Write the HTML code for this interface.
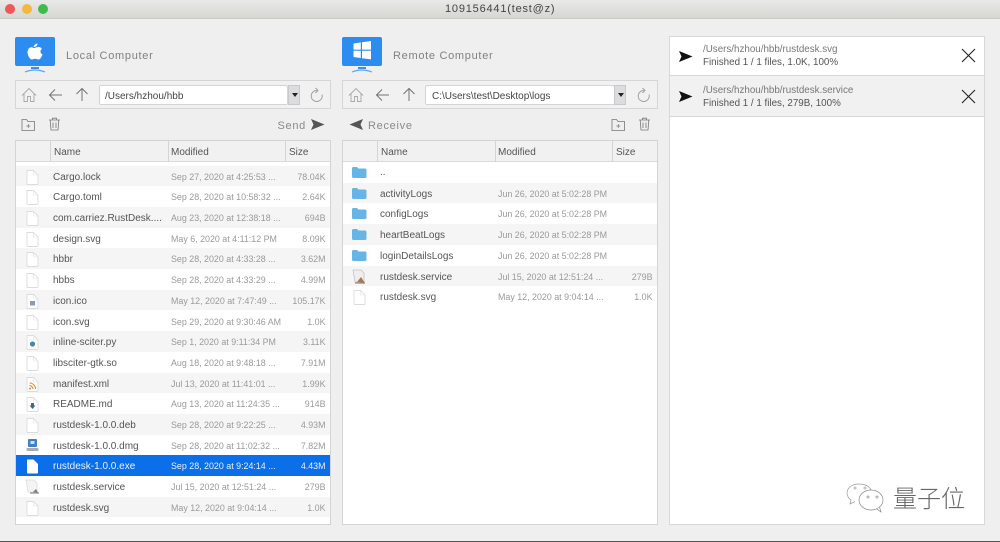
<!DOCTYPE html>
<html><head><meta charset="utf-8">
<style>
html,body{margin:0;padding:0;width:1000px;height:542px;overflow:hidden;background:#efeff0;font-family:"Liberation Sans",sans-serif;}
#wrap{position:relative;width:1000px;height:542px;overflow:hidden;filter:blur(.3px);}
.a{position:absolute;}
.t{position:absolute;white-space:nowrap;}
.tb{left:0;top:0;width:1000px;height:18px;background:linear-gradient(#e9e9e7,#d6d6d3);}
.dot{position:absolute;top:3.5px;width:10px;height:10px;border-radius:50%;}
.box{position:absolute;background:#f1f1f2;border:1px solid #d6d6d8;box-sizing:border-box;}
.inp{position:absolute;height:20px;top:85px;background:#fff;border:1px solid #d4d4d6;box-sizing:border-box;border-radius:2px;font-size:10px;color:#444;line-height:22px;padding-left:5px;white-space:nowrap;}
.drop{position:absolute;top:85px;width:12px;height:20px;background:#dcdcde;border:1px solid #c9c9cb;box-sizing:border-box;}
.drop:after{content:"";position:absolute;left:2.5px;top:7px;border:3px solid transparent;border-top:4px solid #222;}
.table{position:absolute;top:140px;width:316px;height:385px;background:#fff;border:1px solid #d4d4d6;box-sizing:border-box;overflow:hidden;}
.hd{position:absolute;left:0;top:0;width:314px;height:21px;background:#f1f1f2;border-bottom:1px solid #dcdcde;box-sizing:border-box;font-size:10px;color:#555;line-height:20px;}
.hd i{position:absolute;top:0;width:1px;height:21px;background:#d4d4d6;}
.hd span{position:absolute;top:2px;}
.r{position:absolute;left:0;width:314px;height:20.7px;font-size:10px;line-height:20.7px;color:#555;white-space:nowrap;}
.r.g{background:#f5f5f6;}
.r.s{background:#0a6fe8;color:#e8f0fb;}
.r .n{position:absolute;left:37px;top:2px;}
.r .d{position:absolute;left:155px;top:1px;font-size:8.9px;color:#9a9a9c;}
.r.s .d,.r.s .z{color:#e8f0fb;}
.r .z{position:absolute;right:4.5px;top:1px;font-size:8.9px;color:#9a9a9c;}
.r svg{position:absolute;left:9px;top:3px;}
.tt{font-size:11px;color:#808082;letter-spacing:.7px;}
.rt{position:absolute;left:669px;top:36px;width:316px;height:489px;background:#fff;border:1px solid #d8d8da;box-sizing:border-box;}
.it{position:absolute;left:0;width:314px;height:41px;border-bottom:1px solid #d8d8da;box-sizing:border-box;}
.it .p{position:absolute;left:33px;top:7px;font-size:9.8px;color:#777;white-space:nowrap;}
.it .f{position:absolute;left:33px;top:20px;font-size:9.8px;color:#555;white-space:nowrap;}
.it.b .p{top:9px;}
.it.b .f{top:22px;}
svg{position:absolute;overflow:visible;}
</style></head><body>
<svg width="0" height="0" style="position:absolute">
<defs>
<g id="file"><path d="M2 1.5H8.5L13 6V14.5Q13 15.5 12 15.5H3Q2 15.5 2 14.5Z" fill="#fff" stroke="#dcdcde" stroke-width=".9"/><path d="M8.5 1.5V6H13" fill="none" stroke="#e2e2e4" stroke-width=".6"/></g>
<g id="folder"><path d="M0 4.5Q0 3 1.5 3H5L6.5 4.5H13Q14.5 4.5 14.5 6V12.5Q14.5 14 13 14H1.5Q0 14 0 12.5Z" fill="#66b5e6"/></g>
<g id="home"><path d="M1 8.5L8 1.5L15 8.5M3 7V14.5H6.5V9.5H9.5V14.5H13V7" fill="none" stroke="#a8a8aa" stroke-width=".9"/></g>
<g id="back"><path d="M14 8H1.5M7 2.5L1.5 8L7 13.5" fill="none" stroke="#737375" stroke-width="1"/></g>
<g id="up"><path d="M7 14V1.5M1.5 7L7 1.5L12.5 7" fill="none" stroke="#737375" stroke-width="1"/></g>
<g id="ref"><path d="M6.7 2.5A5.5 5.5 0 1 0 12 6.5" fill="none" stroke="#9a9a9c" stroke-width=".9"/><path d="M5.5 0L8 2.5L5.5 5" fill="none" stroke="#9a9a9c" stroke-width=".9"/></g>
<g id="newf"><path d="M1 1.5H5.5L7 3.5H13.5V12.5H1Z" fill="none" stroke="#777" stroke-width=".8"/><path d="M5.3 8H9.3M7.3 6V10" stroke="#777" stroke-width=".7"/></g>
<g id="trash"><path d="M1 3H12M4.5 3V1.2H8.5V3M2.2 3L3 13H10L10.8 3M5 5.5V11M8 5.5V11" fill="none" stroke="#777" stroke-width=".8"/></g>
<g id="send"><path d="M0 0L13.5 5.5L0 11L2.5 5.5Z" fill="#555"/></g>
<g id="sendb"><path d="M0 0L13.5 5.5L0 11L2.5 5.5Z" fill="#111"/></g>
</defs></svg>
<div id="wrap">
<div class="a tb"></div>
<div class="a" style="left:0;top:18px;width:1000px;height:1px;background:#c9c9c6"></div>
<div class="dot" style="left:5px;background:#f0565a"></div>
<div class="dot" style="left:22px;background:#f4b73f"></div>
<div class="dot" style="left:38px;background:#3dbb4b"></div>
<div class="t" style="left:445px;top:3px;font-size:11px;color:#444;letter-spacing:.8px">109156441(test@z)</div>

<!-- LOCAL -->
<div class="a" style="left:15px;top:37px;width:40px;height:29px;background:#2d8cf0;border-radius:2px"></div>
<svg style="left:15px;top:37px" width="40" height="38"><g transform="translate(-1.5,2)"><path d="M20 7.5C21 5.5 22.5 4.5 24 4.5C24 6.5 22.5 8 20.6 8ZM20.4 9C22 9 23 8 25 8C26.5 8 27.8 8.8 28.4 10C26.2 11.2 26.6 14.6 29 15.5C28.2 18 26.5 20.5 25 20.5C23.8 20.5 23 19.7 21.6 19.7C20.2 19.7 19.4 20.5 18.4 20.5C16.6 20.5 14 16.5 14 13.2C14 10 16 8.2 18 8.2C19 8.2 19.6 9 20.4 9Z" fill="#fff"/></g><path d="M16 31H24" stroke="#3a92ee" stroke-width="2"/><path d="M10 35Q20 31 30 35" stroke="#5aa6ef" stroke-width="1.2" fill="none"/></svg>
<div class="t tt" style="left:66px;top:50px">Local Computer</div>
<div class="box" style="left:15px;top:80px;width:316px;height:29px"></div>
<svg style="left:21px;top:87px" width="16" height="16"><use href="#home"/></svg>
<svg style="left:48px;top:87px" width="16" height="16"><use href="#back"/></svg>
<svg style="left:75px;top:87px" width="16" height="16"><use href="#up"/></svg>
<div class="inp" style="left:99px;width:189px">/Users/hzhou/hbb</div>
<div class="drop" style="left:288px"></div>
<svg style="left:310px;top:88px" width="14" height="14"><use href="#ref"/></svg>
<svg style="left:21px;top:118px" width="15" height="14"><use href="#newf"/></svg>
<svg style="left:48px;top:117px" width="13" height="14"><use href="#trash"/></svg>
<div class="t tt" style="left:277.5px;top:120px;color:#8a8a8c">Send</div>
<svg style="left:311px;top:119px" width="14" height="11"><use href="#send"/></svg>

<div class="table" style="left:15px">
<div class="hd"><i style="left:34px"></i><i style="left:151.5px"></i><i style="left:269px"></i><span style="left:38px">Name</span><span style="left:155px">Modified</span><span style="left:273px">Size</span></div>
<div class="r g" style="top:24.6px"><svg width="14" height="18"><use href="#file"/></svg><span class="n">Cargo.lock</span><span class="d">Sep 27, 2020 at 4:25:53 ...</span><span class="z">78.04K</span></div>
<div class="r" style="top:45.3px"><svg width="14" height="18"><use href="#file"/></svg><span class="n">Cargo.toml</span><span class="d">Sep 28, 2020 at 10:58:32 ...</span><span class="z">2.64K</span></div>
<div class="r g" style="top:66px"><svg width="14" height="18"><use href="#file"/></svg><span class="n">com.carriez.RustDesk....</span><span class="d">Aug 23, 2020 at 12:38:18 ...</span><span class="z">694B</span></div>
<div class="r" style="top:86.7px"><svg width="14" height="18"><use href="#file"/></svg><span class="n">design.svg</span><span class="d">May 6, 2020 at 4:11:12 PM</span><span class="z">8.09K</span></div>
<div class="r g" style="top:107.4px"><svg width="14" height="18"><use href="#file"/></svg><span class="n">hbbr</span><span class="d">Sep 28, 2020 at 4:33:28 ...</span><span class="z">3.62M</span></div>
<div class="r" style="top:128.1px"><svg width="14" height="18"><use href="#file"/></svg><span class="n">hbbs</span><span class="d">Sep 28, 2020 at 4:33:29 ...</span><span class="z">4.99M</span></div>
<div class="r g" style="top:148.8px"><svg width="14" height="18"><use href="#file"/><rect x="5" y="8" width="5" height="4.5" fill="#8b9cb0"/></svg><span class="n">icon.ico</span><span class="d">May 12, 2020 at 7:47:49 ...</span><span class="z">105.17K</span></div>
<div class="r" style="top:169.5px"><svg width="14" height="18"><use href="#file"/></svg><span class="n">icon.svg</span><span class="d">Sep 29, 2020 at 9:30:46 AM</span><span class="z">1.0K</span></div>
<div class="r g" style="top:190.2px"><svg width="14" height="18"><use href="#file"/><circle cx="7.5" cy="10" r="2.6" fill="#4a86a8"/></svg><span class="n">inline-sciter.py</span><span class="d">Sep 1, 2020 at 9:11:34 PM</span><span class="z">3.11K</span></div>
<div class="r" style="top:210.9px"><svg width="14" height="18"><use href="#file"/></svg><span class="n">libsciter-gtk.so</span><span class="d">Aug 18, 2020 at 9:48:18 ...</span><span class="z">7.91M</span></div>
<div class="r g" style="top:231.6px"><svg width="14" height="18"><use href="#file"/><path d="M4.5 7A6 6 0 0 1 10.5 13M4.5 9.6A3.5 3.5 0 0 1 8 13" fill="none" stroke="#e2873a" stroke-width="1.1"/><circle cx="5" cy="12.5" r="1" fill="#e2873a"/></svg><span class="n">manifest.xml</span><span class="d">Jul 13, 2020 at 11:41:01 ...</span><span class="z">1.99K</span></div>
<div class="r" style="top:252.3px"><svg width="14" height="18"><use href="#file"/><path d="M6 7H9V9.5H10.5L7.5 13L4.5 9.5H6Z" fill="#44667f"/></svg><span class="n">README.md</span><span class="d">Aug 13, 2020 at 11:24:35 ...</span><span class="z">914B</span></div>
<div class="r g" style="top:273px"><svg width="14" height="18"><use href="#file"/></svg><span class="n">rustdesk-1.0.0.deb</span><span class="d">Sep 28, 2020 at 9:22:25 ...</span><span class="z">4.93M</span></div>
<div class="r" style="top:293.7px"><svg width="14" height="18"><rect x="3" y="1" width="9" height="8" rx="1" fill="#3f7fc4"/><rect x="5.5" y="3" width="4" height="3" fill="#cfe2f5"/><rect x="1.5" y="10" width="12" height="3" rx="1" fill="#a7abb2"/></svg><span class="n">rustdesk-1.0.0.dmg</span><span class="d">Sep 28, 2020 at 11:02:32 ...</span><span class="z">7.82M</span></div>
<div class="r s" style="top:314.4px"><svg width="14" height="18"><path d="M2 1.5H8.5L13 6V14.5Q13 15.5 12 15.5H3Q2 15.5 2 14.5Z" fill="#fff"/></svg><span class="n">rustdesk-1.0.0.exe</span><span class="d">Sep 28, 2020 at 9:24:14 ...</span><span class="z">4.43M</span></div>
<div class="r" style="top:335.1px"><svg width="14" height="18"><path d="M1 1H9L12 4V13H3Z" fill="#f4f4f4" stroke="#dcdcde" stroke-width=".8"/><path d="M8 13L11 10L13 13.5Z" fill="#8a7a66"/><path d="M5 14H14" stroke="#666" stroke-width=".9"/></svg><span class="n">rustdesk.service</span><span class="d">Jul 15, 2020 at 12:51:24 ...</span><span class="z">279B</span></div>
<div class="r g" style="top:355.8px"><svg width="14" height="18"><use href="#file"/></svg><span class="n">rustdesk.svg</span><span class="d">May 12, 2020 at 9:04:14 ...</span><span class="z">1.0K</span></div>
</div>

<!-- REMOTE -->
<div class="a" style="left:342px;top:37px;width:40px;height:29px;background:#2d8cf0;border-radius:2px"></div>
<svg style="left:342px;top:37px" width="40" height="38"><path d="M11.5 6.5L18.8 5.4V12.6H11.5ZM20 5.2L29 4V12.6H20ZM11.5 13.8H18.8V21L11.5 20ZM20 13.8H29V22.4L20 21.2Z" fill="#fff"/><path d="M16 31H24" stroke="#3a92ee" stroke-width="2"/><path d="M10 35Q20 31 30 35" stroke="#5aa6ef" stroke-width="1.2" fill="none"/></svg>
<div class="t tt" style="left:393px;top:50px">Remote Computer</div>
<div class="box" style="left:342px;top:80px;width:316px;height:29px"></div>
<svg style="left:348px;top:87px" width="16" height="16"><use href="#home"/></svg>
<svg style="left:375px;top:87px" width="16" height="16"><use href="#back"/></svg>
<svg style="left:402px;top:87px" width="16" height="16"><use href="#up"/></svg>
<div class="inp" style="left:425px;width:190px;padding-left:6px">C:\Users\test\Desktop\logs</div>
<div class="drop" style="left:614px"></div>
<svg style="left:637px;top:88px" width="14" height="14"><use href="#ref"/></svg>
<svg style="left:349px;top:119px" width="14" height="11"><g transform="translate(14,0) scale(-1,1)"><use href="#send"/></g></svg>
<div class="t tt" style="left:368px;top:120px;color:#8a8a8c">Receive</div>
<svg style="left:611px;top:118px" width="15" height="14"><use href="#newf"/></svg>
<svg style="left:638px;top:117px" width="13" height="14"><use href="#trash"/></svg>

<div class="table" style="left:342px">
<div class="hd"><i style="left:34px"></i><i style="left:151.5px"></i><i style="left:269px"></i><span style="left:38px">Name</span><span style="left:155px">Modified</span><span style="left:273px">Size</span></div>
<div class="r" style="top:21px"><svg style="top:2px" width="16" height="18"><use href="#folder"/></svg><span class="n" style="top:1px">..</span></div>
<div class="r g" style="top:41.7px"><svg style="top:2px" width="16" height="18"><use href="#folder"/></svg><span class="n">activityLogs</span><span class="d">Jun 26, 2020 at 5:02:28 PM</span></div>
<div class="r" style="top:62.4px"><svg style="top:2px" width="16" height="18"><use href="#folder"/></svg><span class="n">configLogs</span><span class="d">Jun 26, 2020 at 5:02:28 PM</span></div>
<div class="r g" style="top:83.1px"><svg style="top:2px" width="16" height="18"><use href="#folder"/></svg><span class="n">heartBeatLogs</span><span class="d">Jun 26, 2020 at 5:02:28 PM</span></div>
<div class="r" style="top:103.8px"><svg style="top:2px" width="16" height="18"><use href="#folder"/></svg><span class="n">loginDetailsLogs</span><span class="d">Jun 26, 2020 at 5:02:28 PM</span></div>
<div class="r g" style="top:124.5px"><svg width="14" height="18"><path d="M1 1H9L12 4V13H3Z" fill="#eeeeee" stroke="#c4c4c6" stroke-width=".8"/><path d="M5 13L9 8L12.5 13.5Z" fill="#a87a4c"/><path d="M3 14H13" stroke="#666" stroke-width=".9"/></svg><span class="n">rustdesk.service</span><span class="d">Jul 15, 2020 at 12:51:24 ...</span><span class="z">279B</span></div>
<div class="r" style="top:145.2px"><svg width="14" height="18"><use href="#file"/></svg><span class="n">rustdesk.svg</span><span class="d">May 12, 2020 at 9:04:14 ...</span><span class="z">1.0K</span></div>
</div>

<!-- TRANSFER -->
<div class="rt">
<div class="it" style="top:0;height:39px"><svg style="left:9px;top:13.5px" width="14" height="11"><use href="#sendb"/></svg><span class="p">/Users/hzhou/hbb/rustdesk.svg</span><span class="f">Finished 1 / 1 files, 1.0K, 100%</span><svg style="left:290.5px;top:11px" width="14" height="14"><path d="M1 1L14 14M14 1L1 14" stroke="#222" stroke-width="1.1"/></svg></div>
<div class="it b" style="top:39px;background:#f1f1f2"><svg style="left:9px;top:15px" width="14" height="11"><use href="#sendb"/></svg><span class="p">/Users/hzhou/hbb/rustdesk.service</span><span class="f">Finished 1 / 1 files, 279B, 100%</span><svg style="left:290.5px;top:13px" width="14" height="14"><path d="M1 1L14 14M14 1L1 14" stroke="#222" stroke-width="1.1"/></svg></div>
</div>

<!-- WATERMARK -->
<svg style="left:846px;top:483px" width="42" height="32"><path d="M13 1C6 1 1 5 1 10C1 13 3 16 5 17L4 21L9 18.5" fill="none" stroke="#999" stroke-width=".7"/><path d="M13 1C20 1 24 4 25.5 8" fill="none" stroke="#999" stroke-width=".7"/><ellipse cx="25" cy="17" rx="12" ry="10" fill="#fff" stroke="#888" stroke-width=".7"/><path d="M31 26L35 29L33.5 24" fill="#fff" stroke="#888" stroke-width=".7"/><circle cx="9" cy="5" r="1.1" fill="none" stroke="#999" stroke-width=".6"/><circle cx="19" cy="5" r="1.1" fill="none" stroke="#999" stroke-width=".6"/><circle cx="22" cy="14" r="1.1" fill="none" stroke="#888" stroke-width=".6"/><circle cx="31" cy="14" r="1.1" fill="none" stroke="#888" stroke-width=".6"/></svg>
<div class="t" style="left:893px;top:486px;font-size:24px;line-height:28px;color:#666;font-family:'Liberation Sans','Noto Sans CJK SC',sans-serif;font-weight:300">量子位</div>
<div class="a" style="left:0;top:541px;width:1000px;height:1px;background:#555"></div>
</div>
</body></html>
